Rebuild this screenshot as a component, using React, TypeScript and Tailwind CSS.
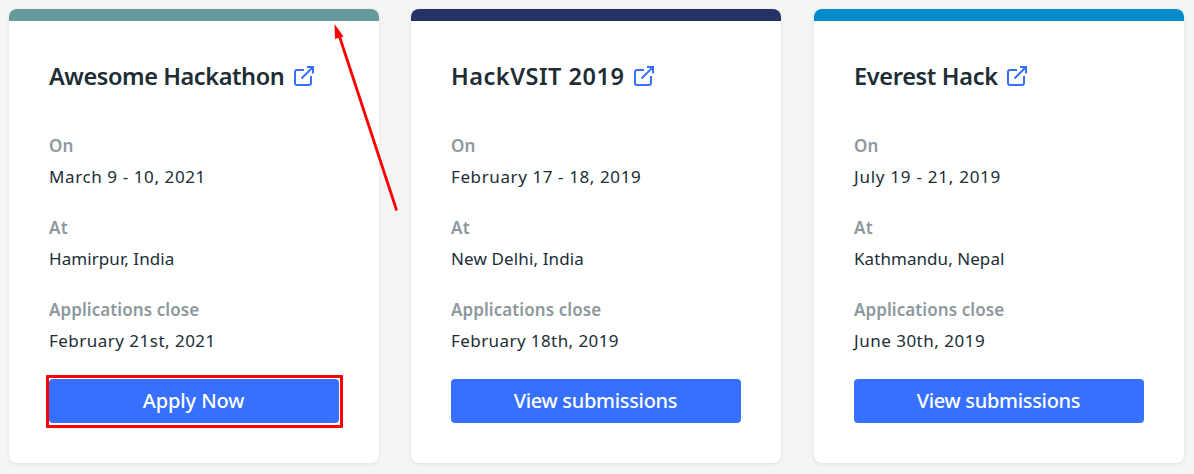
type Line = { text: string; tracking: string };
type Hackathon = {
  name: Line;
  nameWidth: string;
  date: Line;
  place: Line;
  close: Line;
  action: Line;
  bar: string;
  highlighted?: boolean;
};

const hackathons: Hackathon[] = [
  {
    name: { text: "Awesome Hackathon", tracking: "tracking-[-0.42px]" },
    nameWidth: "w-[235px]",
    date: { text: "March 9 - 10, 2021", tracking: "tracking-[0.6px]" },
    place: { text: "Hamirpur, India", tracking: "tracking-[0.07px]" },
    close: { text: "February 21st, 2021", tracking: "tracking-[0.48px]" },
    action: { text: "Apply Now", tracking: "tracking-[-0.1px]" },
    bar: "bg-[#669999]",
    highlighted: true,
  },
  {
    name: { text: "HackVSIT 2019", tracking: "tracking-[0.5px]" },
    nameWidth: "w-[173px]",
    date: { text: "February 17 - 18, 2019", tracking: "tracking-[0.6px]" },
    place: { text: "New Delhi, India", tracking: "tracking-[0.13px]" },
    close: { text: "February 18th, 2019", tracking: "tracking-[0.42px]" },
    action: { text: "View submissions", tracking: "tracking-[-0.31px]" },
    bar: "bg-[#253267]",
  },
  {
    name: { text: "Everest Hack", tracking: "tracking-[-0.32px]" },
    nameWidth: "w-[143px]",
    date: { text: "July 19 - 21, 2019", tracking: "tracking-[0.74px]" },
    place: { text: "Kathmandu, Nepal", tracking: "tracking-[0.06px]" },
    close: { text: "June 30th, 2019", tracking: "tracking-[0.5px]" },
    action: { text: "View submissions", tracking: "tracking-[-0.31px]" },
    bar: "bg-[#008bcb]",
  },
];

function ExternalLink() {
  return (
    <svg className="mb-px h-[21px] w-[21px] shrink-0" viewBox="0 0 21 21" fill="none" stroke="#3770ff" strokeWidth="2">
      <path d="M10 4H3Q1 4 1 6V17Q1 19 3 19H15Q17 19 17 17V10" />
      <path d="M13 1H19V7.5M19 1L7.5 12.5" />
    </svg>
  );
}

function Field({ label, value, labelTracking }: { label: string; value: Line; labelTracking: string }) {
  return (
    <div className="flex h-[82px] flex-col">
      <dt className="h-[31px] text-[17px] leading-[31px] font-semibold text-[#8d989d]">
        <span className={labelTracking}>{label}</span>
      </dt>
      <dd className="h-[31px] text-[17px] leading-[31px] text-[#202d35]">
        <span className={value.tracking}>{value.text}</span>
      </dd>
    </div>
  );
}

function Card({ h }: { h: Hackathon }) {
  return (
    <article className="flex h-[454px] w-[370px] flex-col overflow-hidden rounded-lg bg-white shadow-[0_1px_4px_rgba(0,0,0,0.09)]">
      <div className={`h-3 shrink-0 ${h.bar}`} />
      <div className="flex flex-col px-10">
        <h2 className="mt-9 flex h-10 items-center gap-[10px] text-[23.5px] font-semibold whitespace-nowrap text-[#202d35]">
          <span className={`${h.nameWidth} ${h.name.tracking}`}>{h.name.text}</span>
          <ExternalLink />
        </h2>
        <dl className="mt-[33px] whitespace-nowrap">
          <Field label="On" value={h.date} labelTracking="tracking-[0px]" />
          <Field label="At" value={h.place} labelTracking="tracking-[0.3px]" />
          <Field label="Applications close" value={h.close} labelTracking="tracking-[0.08px]" />
        </dl>
        <div className="relative mt-[3px]">
          <button className="flex h-11 w-[290px] items-center justify-center rounded bg-[#3770ff] pr-px text-[20px] font-medium text-white">
            <span className={h.action.tracking}>{h.action.text}</span>
          </button>
          {h.highlighted && (
            <div className="absolute -top-1 -left-[3px] h-[53px] w-[297px] rounded-[1px] border-[3px] border-[#ff0000]" />
          )}
        </div>
      </div>
    </article>
  );
}

export default function App() {
  return (
    <div className="h-[474px] w-[1194px] overflow-hidden bg-white font-['Noto_Sans',sans-serif]">
      <main className="relative h-[474px] bg-[#f4f6f6]">
        <div className="flex gap-8 pt-[9px] pl-[9px]">
          {hackathons.map((h, i) => (
            <div key={h.name.text} className={i === 2 ? "ml-px" : ""}>
              <Card h={h} />
            </div>
          ))}
        </div>
        <svg className="absolute top-[20px] left-[325px] h-[195px] w-[80px]" viewBox="325 20 80 195">
          <path d="M339 35L396.7 210.5" stroke="#ff0000" strokeWidth="2.8" fill="none" />
          <path d="M334.5 24L343.5 36.5L335 39Z" fill="#ff0000" />
        </svg>
      </main>
    </div>
  );
}
